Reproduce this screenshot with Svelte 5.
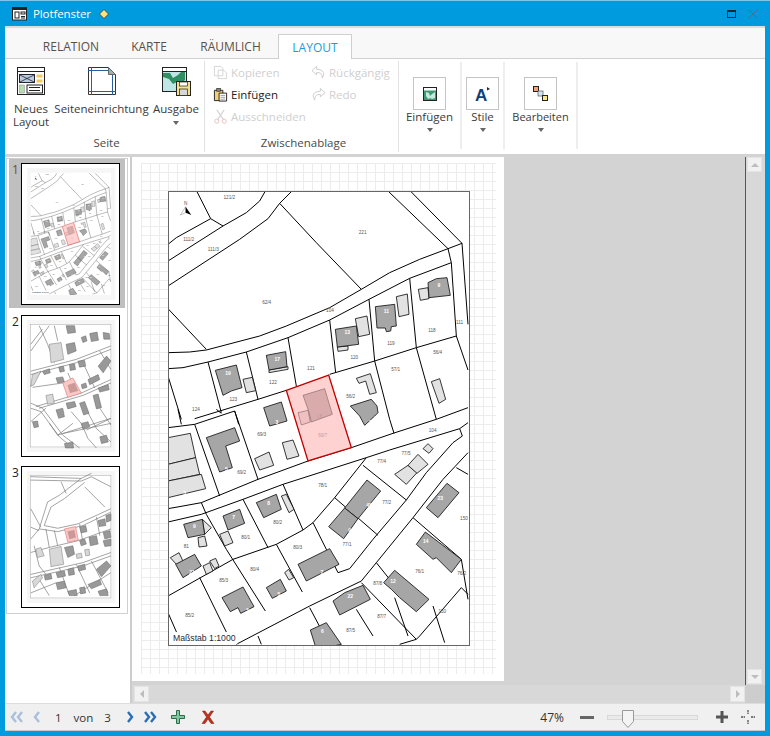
<script>
  const roads = [
    "111,35 153,118 190,140","25,195 50,175 153,118","25,245 190,140 260,100 300,65 317,35",
    "25,320 240,180 325,118 360,72 397,35","360,72 470,190 605,330","25,388 140,510",
    "25,520 90,518 140,512 300,470 380,440 510,385 605,330 690,280 780,240 865,208 907,192",
    "25,568 70,565 145,548 260,518 385,475 510,422 628,360 750,297 875,250",
    "685,35 865,208 875,250 890,470 925,572","752,35 907,192 925,435",
    "145,548 185,700","260,518 295,660","385,475 410,620","510,422 528,580","628,360 645,545 690,720 703,762",
    "750,297 770,505 830,720","105,718 295,660 380,633","510,585 645,545 770,505 890,470","25,590 65,720",
    "225,695 237,735"
  ];
  const roads2 = [
    "25,55 105,45 225,5","445,155 575,115 700,72 830,30 925,-5","25,298 70,290 125,280 295,210 445,155",
    "25,338 125,315 250,270 370,225 620,145 690,122 900,58 925,40",
    "900,58 908,80 880,100 800,190 740,272 640,390 570,478 535,490",
    "925,130 850,210 760,325 650,460 605,515 450,590 230,705",
    "25,560 220,450 350,405 430,362 460,340 525,265 620,145",
    "460,340 500,420 535,490","525,265 655,378","610,168 740,272","370,225 430,362",
    "250,270 325,415","125,280 140,315 200,420 317,605","350,405 428,548","120,505 200,668","25,610 60,690",
    "450,595 495,680","590,600 640,680","605,520 770,690","650,460 690,510","760,325 905,450 925,570",
    "905,535 780,680 770,690 720,705","705,565 745,680","820,590 855,700","295,680 305,705","105,45 180,260",
    "225,5 295,210","890,175 925,195","905,535 925,555","55,0 65,45","170,0 185,12"
  ];
  const dark = [
    "167,573 230,557 247,625 215,635 190,648","320,528 378,517 382,562 328,572","527,450 590,440 597,495 533,503",
    "647,382 705,375 710,440 695,442 693,455 680,457 677,446 652,446","805,310 830,298 862,295 872,348 808,355",
    "572,680 635,660 652,680 655,700 645,710 615,738 600,710","312,685 365,668 382,725 330,740"
  ];
  const light = [
    "250,600 278,594 288,634 260,640","328,572 385,562 385,570 328,580","587,418 622,410 630,465 597,472",
    "533,503 565,500 565,512 535,516","710,352 743,344 748,405 718,412","776,330 805,325 808,358 782,363",
    "590,597 632,583 650,640 630,645 618,605 598,612","815,607 840,598 858,660 838,672"
  ];
  const dark2 = [
    "140,85 225,55 240,95 198,110 218,175 180,188","290,280 350,255 365,300 312,325","190,320 240,300 255,342 205,362",
    "72,345 128,330 135,375 85,385","48,465 105,435 125,470 70,505","622,212 663,245 595,328 555,296",
    "555,296 595,328 552,388 507,352","800,295 862,222 898,250 835,325","415,465 510,418 538,465 440,515",
    "770,405 797,368 905,450 875,490 830,445 820,450","320,535 362,510 380,545 338,567",
    "187,565 250,533 283,592 243,612 235,595 212,607","520,575 555,550 610,528 632,570 540,617",
    "672,520 705,483 808,570 770,607 720,565 695,540","452,662 500,640 545,705 470,720"
  ];
  const light2 = [
    "25,85 92,72 108,145 25,165","25,165 108,145 120,195 25,215","25,215 125,195 138,238 25,265",
    "285,148 328,128 342,168 300,182","368,100 400,92 418,140 382,150","128,330 155,355 135,375",
    "115,385 135,380 142,410 118,413","180,375 205,365 220,400 195,410","365,260 380,255 403,300 388,310",
    "32,445 58,430 72,460 50,465","130,470 150,460 160,485 140,495","150,455 168,447 178,470 165,478",
    "705,195 745,168 772,190 740,225","745,168 775,135 805,165 772,192","790,118 805,103 820,118 808,132",
    "375,490 387,480 402,505 388,512"
  ];
  const labels = [
    ["121/2",209,58],["111/2",87,185],["111/3",161,215],["221",609,163],["62/4",321,373],["104",511,397],["111",900,433],
    ["118",817,457],["119",694,496],["120",584,538],["121",454,571],["122",340,613],["123",221,665],["124",109,695],
    ["56/4",834,523],["57/1",708,574],["56/2",573,655]
  ];
  const labels2 = [
    ["69/3",306,80],["69/2",246,193],["104",819,67],["77/5",739,136],["77/4",666,160],["78/1",489,233],["77/2",681,283],
    ["150",913,332],["80/2",354,344],["80/1",258,388],["81",80,415],["80/3",414,418],["77/1",562,409],["80/4",285,485],
    ["76/1",780,491],["76/2",906,497],["85/3",192,518],["87/8",654,526],["85/2",90,623],["87/7",666,626],["87/5",573,668],["150",848,612]
  ];
  const nums = [["19",205,587],["17",353,545],["13",563,464],["11",680,402],["9",838,323]];
  const nums2 = [
    ["8",327,287],["7",222,330],["9",104,357],["21",97,493],["45",628,292],["9",570,367],["23",842,272],["14",798,401],
    ["12",700,520],["7",487,493],["5",358,560],["5",264,608],["22",572,567],["6",488,672],["5",200,185],["3",75,257],["20",636,45],["3",352,43]
  ];

  const thumb2 = {
    lines: ["95,190 230,155 333,115","95,200 230,165 333,125","100,238 190,225","110,295 245,255 333,215","120,300 250,262 333,225",
      "95,285 130,300 190,380 240,418","95,300 125,310 180,385 220,418","175,380 333,330","190,375 333,345","95,110 130,65","95,130 150,55",
      "120,55 145,110 165,165","165,55 175,100","205,195 225,240","250,165 285,240","300,130 333,185","215,310 245,345 265,390 290,418",
      "255,295 290,360 333,400","300,300 333,350","140,300 95,340","150,345 175,380","95,235 125,190","220,345 175,380","260,365 333,330"],
    dark: ["200,110 225,105 230,130 205,140","245,90 258,85 262,100 250,105","270,78 292,74 296,98 275,102","200,55 225,55 228,75 205,78",
      "310,75 328,78 330,95 312,95","295,175 320,145 333,160 310,195","265,215 295,200 300,215 270,230","245,230 258,225 262,238 248,242",
      "210,170 225,168 228,185 212,188","178,178 192,175 195,190 182,193","235,160 255,158 258,175 240,178","170,305 190,300 195,325 178,330",
      "200,285 225,280 230,295 205,302","240,285 255,280 268,315 252,320","280,262 295,258 305,298 290,302","295,240 325,230 328,245 300,252",
      "245,345 265,340 270,355 250,362","195,405 220,400 222,418 198,418","300,385 320,380 325,400 305,405","100,340 115,338 118,355 105,358",
      "130,190 150,183 153,195 135,200","170,210 190,207 195,222 175,225"],
    light: ["150,110 185,105 193,155 155,165","100,200 125,190 105,230 95,235","140,262 160,258 165,285 145,288"],
    lot: ["190,225 220,210 245,255 205,268","205,232 225,225 235,248 212,254"]
  };
  const thumb3 = {
    lines: ["95,55 245,60 275,45","95,65 245,68 275,55 333,85","245,60 180,110 145,130 120,210 95,240","255,72 195,120 155,145 135,200 175,208 235,195 333,150",
      "120,210 175,218 250,200 333,160","185,70 200,105","255,85 315,145","95,150 125,205","95,205 120,215","95,280 150,265 235,245 333,210",
      "95,345 250,310 333,280","95,355 250,320 333,290","105,260 120,320 140,345","140,210 150,265","165,215 175,260","240,195 250,250","290,175 300,230",
      "180,325 210,408","230,315 270,400","275,305 325,400","333,340 225,408","120,360 150,408","95,400 170,370"],
    dark: ["195,265 220,260 225,285 205,295","240,205 258,200 262,218 245,222","268,235 290,230 295,255 272,260","240,245 255,240 260,255 245,260",
      "295,185 315,180 318,200 298,203","318,170 333,165 333,185 320,190","310,220 330,215 333,235 315,240","310,245 333,240 333,260 315,262",
      "235,320 255,315 258,330 238,335","290,330 320,305 333,320 305,352","265,375 300,360 305,375 275,388","295,395 320,388 325,408 300,408",
      "205,395 230,390 233,408 210,408","170,340 195,335 198,350 175,355","205,330 222,325 225,345 208,348","240,385 255,382 258,400 243,403",
      "135,348 155,343 158,358 138,362","170,370 195,365 200,385 175,390"],
    light: ["150,270 185,262 193,315 155,322","230,285 245,282 248,295 232,298","255,272 268,270 270,288 258,290","100,365 125,345 130,355 105,385","110,270 125,265 135,290 115,295"],
    lot: ["195,210 228,203 236,243 205,250","205,218 224,214 228,235 210,240"]
  };
</script>

{#snippet smallThumb(d)}
  <svg class="thumb-svg" viewBox="69 27 288 414" aria-hidden="true">
    <rect x="69" y="27" width="288" height="414" fill="#fff" />
    <rect x="84" y="38" width="262" height="392" fill="#f6f6f6" />
    <rect x="95" y="52" width="238" height="363" fill="#fff" stroke="#999" stroke-width="1.200" />
    {#each d.lines as p}<polyline points={p} fill="none" stroke="#777" stroke-width="2" />{/each}
    {#each d.light as p}<polygon points={p} fill="#d8d8d8" stroke="#777" stroke-width="1.500" />{/each}
    {#each d.dark as p}<polygon points={p} fill="#999" stroke="#666" stroke-width="1.500" />{/each}
    <polygon points={d.lot[0]} fill="#fbc8c8" stroke="#e08080" stroke-width="2" />
    <polygon points={d.lot[1]} fill="#c99" stroke="#b88" stroke-width="1" />
  </svg>
{/snippet}

<div class="win">
  <header class="title">
    <svg class="ti" viewBox="0 0 16 14" aria-hidden="true">
      <rect x=".5" y=".5" width="14" height="12.500" fill="#fff" stroke="#222" />
      <rect x="1" y="1" width="13" height="2" fill="#222" />
      <rect x="3" y="5" width="4" height="6" fill="none" stroke="#222" />
      <rect x="9" y="5" width="4" height="2" fill="none" stroke="#222" />
      <path d="M9 9.500h4M9 11h4" stroke="#222" />
    </svg>
    <span class="ttext">Plotfenster</span>
    <svg class="dia" viewBox="0 0 10 10" aria-hidden="true"><path d="M5 .5 9.500 5 5 9.500.5 5z" fill="#ffe27a" stroke="#333" stroke-width=".7" /></svg>
    <span class="spacer"></span>
    <svg class="maxi" viewBox="0 0 9 8" aria-hidden="true"><rect x=".5" y=".5" width="8" height="7" fill="none" stroke="#1b2a38" /><rect x="0" y="0" width="9" height="2" fill="#1b2a38" /></svg>
    <svg class="close" viewBox="0 0 10 10" aria-hidden="true"><path d="M.5.500l9 9M9.500.500l-9 9" stroke="#4c6f86" stroke-width="1" /></svg>
  </header>

  <div class="inner">
    <nav class="tabs">
      <span class="tab">RELATION</span>
      <span class="tab">KARTE</span>
      <span class="tab">RÄUMLICH</span>
      <span class="tab active">LAYOUT</span>
    </nav>

    <section class="ribbon">
      <div class="group g1">
        <div class="cols">
          <div class="big c1">
            <svg class="bigicon" viewBox="0 0 28 28" aria-hidden="true">
              <rect x=".5" y=".5" width="27" height="27" fill="#fff" stroke="#222" />
              <path d="M.5 4.500h27" stroke="#222" />
              <rect x="2.500" y="7.500" width="15" height="8" fill="#bcd" stroke="#223" />
              <path d="M3 8l14 7M17 8 3 15" stroke="#223" stroke-width=".8" />
              <rect x="19.500" y="7.500" width="6" height="3" fill="#f4c860" />
              <rect x="19.500" y="12.500" width="6" height="3" fill="#f4c860" />
              <rect x="2.500" y="18" width="5" height="8" fill="#b8dcae" stroke="#889" stroke-width=".5" />
              <rect x="10" y="18" width="15.500" height="8" fill="#fff" stroke="#222" />
              <path d="M12 20.500h11M12 23.500h11" stroke="#222" />
            </svg>
            <span class="lbl">Neues<br />Layout</span>
          </div>
          <div class="big c2">
            <svg class="bigicon" viewBox="0 0 28 28" aria-hidden="true">
              <path d="M.5.500h20l7 7v20H.5z" fill="#fff" stroke="#333" />
              <path d="M20.500.500v7h7z" fill="#aaa" stroke="#666" />
              <path d="M3.500 0v28M24.500 8v20M0 3.500h20M0 24.500h28" stroke="#2b5c9e" stroke-width="1" />
            </svg>
            <span class="lbl">Seiteneinrichtung</span>
          </div>
          <div class="big c3">
            <svg class="bigicon wide" viewBox="0 0 29 29" aria-hidden="true">
              <rect x=".5" y=".5" width="24" height="24" fill="#fff" stroke="#222" />
              <path d="M.5 4.500h24" stroke="#222" />
              <rect x="1" y="5" width="23" height="19" fill="#bfe5e4" />
              <path d="M1 6h7l3 5 5-3 3-3h4v8l-4 4-4-2-4 2-4-5-6-2z" fill="#2f8f63" />
              <rect x="14.500" y="14.500" width="14" height="14" fill="#f7e08a" stroke="#222" />
              <rect x="17.500" y="15" width="8" height="4" fill="#fff" stroke="#222" stroke-width=".7" />
              <rect x="17.500" y="22" width="8" height="6.500" fill="#d8d8d8" stroke="#222" stroke-width=".7" />
            </svg>
            <span class="lbl">Ausgabe</span>
            <i class="caret"></i>
          </div>
        </div>
        <div class="gt">Seite</div>
      </div>

      <div class="group g2">
        <div class="cols2">
          <div class="col">
            <div class="sm off">
              <svg viewBox="0 0 16 16" aria-hidden="true"><path d="M1.500 1.500h7l2 2v8h-9zM5.500 5.500h6l3 3v6h-9z" fill="#fff" stroke="#d4d4d4" /></svg>
              <span>Kopieren</span>
            </div>
            <div class="sm">
              <svg viewBox="0 0 16 16" aria-hidden="true">
                <path d="M1.500 3.500h9v11h-9z" fill="#f4cf73" stroke="#222" />
                <rect x="4" y="1.500" width="4" height="3" fill="#888" stroke="#222" stroke-width=".7" />
                <path d="M6.500 6.500h8v8.500h-8z" fill="#fff" stroke="#222" />
                <path d="M8 9h5M8 11h5M8 13h5" stroke="#777" stroke-width=".7" />
              </svg>
              <span>Einfügen</span>
            </div>
            <div class="sm off">
              <svg viewBox="0 0 16 16" aria-hidden="true"><path d="M4 1l7 10M12 1 5 11" stroke="#d4d4d4" stroke-width="1.300" fill="none" /><circle cx="4" cy="13" r="2.200" fill="#fff" stroke="#e8c0c0" /><circle cx="12" cy="13" r="2.200" fill="#fff" stroke="#e8c0c0" /></svg>
              <span>Ausschneiden</span>
            </div>
          </div>
          <div class="col">
            <div class="sm off">
              <svg viewBox="0 0 16 16" aria-hidden="true"><path d="M6 1.500 1 6l5 4.500V8c4 0 6 1 6 6 3-5 2-9-6-9.500z" fill="#fff" stroke="#ccc" /></svg>
              <span>Rückgängig</span>
            </div>
            <div class="sm off">
              <svg viewBox="0 0 16 16" aria-hidden="true"><path d="M10 1.500 15 6l-5 4.500V8c-4 0-6 1-6 6-3-5-2-9 6-9.500z" fill="#fff" stroke="#ccc" /></svg>
              <span>Redo</span>
            </div>
          </div>
        </div>
        <div class="gt">Zwischenablage</div>
      </div>

      <div class="group g3">
        <div class="boxb">
          <svg viewBox="0 0 14 14" aria-hidden="true"><rect x=".5" y=".5" width="13" height="13" fill="#3d9a72" stroke="#222" /><rect x="1" y="1" width="12" height="2.500" fill="#fff" /><path d="M3 5l3 1 1 3 2-2 3-2v6l-3 1-2-1-2 1-2-3z" fill="#c6e8e0" /></svg>
        </div>
        <span class="lbl">Einfügen</span>
        <i class="caret"></i>
      </div>
      <div class="group g4">
        <div class="boxb">
          <svg viewBox="0 0 16 16" aria-hidden="true"><text class="aglyph" x="0" y="15">A</text><path d="M12 1v3.500l3-1.500z" fill="#223" /></svg>
        </div>
        <span class="lbl">Stile</span>
        <i class="caret"></i>
      </div>
      <div class="group g5">
        <div class="boxb">
          <svg viewBox="0 0 15 15" aria-hidden="true">
            <rect x=".5" y=".5" width="5" height="5" fill="#f4a27c" stroke="#222" />
            <rect x="5" y="5" width="5" height="5" fill="#cfe6f2" stroke="#555" stroke-width=".7" />
            <rect x="9.500" y="9.500" width="5" height="5" fill="#f7e68a" stroke="#222" />
          </svg>
        </div>
        <span class="lbl small">Bearbeiten</span>
        <i class="caret"></i>
      </div>
    </section>

    <div class="body">
      <aside class="left">
        <div class="thumbs">
          <div class="item sel">
            <span class="n">1</span>
            <div class="frame">
              <svg class="thumb-svg" viewBox="69 27 288 414" aria-hidden="true">
                <rect x="69" y="27" width="288" height="414" fill="#fff" />
                <rect x="84" y="38" width="262" height="392" fill="#f6f6f6" />
                <rect x="95" y="52" width="238" height="363" fill="#fff" />
                <use href="#plan" x="95" y="52" width="238" height="363" />
              </svg>
            </div>
          </div>
          <div class="item">
            <span class="n">2</span>
            <div class="frame">{@render smallThumb(thumb2)}</div>
          </div>
          <div class="item">
            <span class="n">3</span>
            <div class="frame">{@render smallThumb(thumb3)}</div>
          </div>
        </div>
      </aside>

      <div class="main">
        <div class="view">
          <div class="page">
            <div class="grid">
              <svg class="plan" width="302" height="455" viewBox="0 0 302 455" role="img" aria-label="Lageplan">
                <symbol id="plan" viewBox="25 35 903 1362">
                  <rect x="25" y="35" width="903" height="1362" fill="#fff" />
                  <g fill="none" stroke="#000" stroke-width="3">
                    {#each roads as p}<polyline points={p} />{/each}
                    <g transform="translate(0 690)">{#each roads2 as p}<polyline points={p} />{/each}</g>
                  </g>
                  <g stroke="#111" stroke-width="2.500">
                    {#each light as p}<polygon points={p} fill="#e2e2e2" />{/each}
                    {#each dark as p}<polygon points={p} fill="#a6a6a6" />{/each}
                    <g transform="translate(0 690)">
                      {#each light2 as p}<polygon points={p} fill="#e2e2e2" />{/each}
                      {#each dark2 as p}<polygon points={p} fill="#a6a6a6" />{/each}
                    </g>
                  </g>
                  <polygon points="380,633 507,587 575,805 445,845" fill="#ffd2d2" stroke="#c00000" stroke-width="4" />
                  <polygon points="430,648 495,628 518,705 455,728 447,695" fill="#d9abab" stroke="#8a6a6a" stroke-width="2" />
                  <polygon points="415,700 445,693 452,728 425,737" fill="#f0c0c0" stroke="#8a6a6a" stroke-width="2" />
                  <g class="lab">
                    {#each labels as l}<text x={l[1]} y={l[2]}>{l[0]}</text>{/each}
                    <g transform="translate(0 690)">{#each labels2 as l}<text x={l[1]} y={l[2]}>{l[0]}</text>{/each}</g>
                  </g>
                  <text class="lab red" x="489" y="772">69/7</text>
                  <text class="lab red" x="480" y="716">18</text>
                  <g class="hn">
                    {#each nums as l}<text x={l[1]} y={l[2]}>{l[0]}</text>{/each}
                    <g transform="translate(0 690)">{#each nums2 as l}<text x={l[1]} y={l[2]}>{l[0]}</text>{/each}</g>
                  </g>
                  <path d="M78 82 62 107l16-7z" fill="#fff" stroke="#888" stroke-width="1.500" />
                  <path d="M78 82l17 25-17-7z" fill="#000" />
                  <text class="lab" x="78" y="78">N</text>
                  <rect x="33" y="1358" width="200" height="36" fill="#fff" />
                  <text class="scale" x="40" y="1384">Maßstab 1:1000</text>
                </symbol>
                <rect x=".5" y=".5" width="301" height="454" fill="#fff" />
                <use href="#plan" x="0" y="0" width="301" height="454" />
                <rect x=".5" y=".5" width="301" height="454" fill="none" stroke="#666" />
              </svg>
            </div>
          </div>
        </div>
        <div class="vbar">
          <span class="sb"><i class="tri up"></i></span>
          <span class="sb"><i class="tri down"></i></span>
        </div>
        <div class="hbar">
          <span class="sb h"><i class="tri left-t"></i></span>
          <span class="sb h"><i class="tri right-t"></i></span>
        </div>
        <div class="corner"></div>
      </div>
    </div>

    <footer class="status">
      <svg class="nav dbl" viewBox="0 0 14 12" aria-hidden="true"><path d="M6 1 2 6l4 5M12 1 8 6l4 5" fill="none" stroke="#a9bfdc" stroke-width="2.400" /></svg>
      <svg class="nav sgl" viewBox="0 0 8 12" aria-hidden="true"><path d="M6 1 2 6l4 5" fill="none" stroke="#a9bfdc" stroke-width="2.400" /></svg>
      <span class="pg a">1</span>
      <span class="pg b">von</span>
      <span class="pg c">3</span>
      <svg class="nav sgl2" viewBox="0 0 8 12" aria-hidden="true"><path d="M2 1l4 5-4 5" fill="none" stroke="#2a6db5" stroke-width="2.400" /></svg>
      <svg class="nav dbl2" viewBox="0 0 14 12" aria-hidden="true"><path d="M2 1l4 5-4 5M8 1l4 5-4 5" fill="none" stroke="#2a6db5" stroke-width="2.400" /></svg>
      <svg class="plus" viewBox="0 0 14 14" aria-hidden="true"><path d="M5.500.500h3v5h5v3h-5v5h-3v-5h-5v-3h5z" fill="#7fc8a0" stroke="#2e6b4c" /></svg>
      <svg class="xx" viewBox="0 0 14 14" aria-hidden="true"><path d="M1.500 1h2.500L7 5l3-4h2.500L8.500 7l4.500 6.500h-3L7 9l-3 4.500H1L5.500 7z" fill="#c0301c" stroke="#7a1a10" stroke-width=".5" /></svg>
      <span class="spacer"></span>
      <span class="pct">47%</span>
      <span class="minus"></span>
      <div class="slider"><svg class="knob" viewBox="0 0 12 18" aria-hidden="true"><path d="M.5.500h11v11L6 17.500.5 11.500z" fill="#f4f4f4" stroke="#999" /></svg></div>
      <svg class="zplus" viewBox="0 0 12 12" aria-hidden="true"><path d="M6 0v12M0 6h12" stroke="#555" stroke-width="3" /></svg>
      <svg class="pan" viewBox="0 0 14 14" aria-hidden="true"><path d="M7 0v4M7 10v4M0 7h4M10 7h4" stroke="#555" stroke-width="1.300" stroke-dasharray="2 .6" /></svg>
    </footer>
  </div>
</div>

<style>
  :global(body) { margin: 0; background: #009ade; }
  .win {
    width: 770px; height: 736px; box-sizing: border-box;
    background: #009ade; border-top: 1px solid #7cc6ee;
    display: flex; flex-direction: column;
    font-family: "Open Sans", "Noto Sans", sans-serif; font-size: 12px; color: #333;
  }
  .title { height: 25px; display: flex; align-items: center; padding: 0 8px 0 12px; flex: none; }
  .ti { width: 16px; height: 14px; }
  .ttext { color: #fff; margin-left: 5px; font-size: 11.5px; letter-spacing: -.1px; }
  .dia { width: 10px; height: 10px; margin-left: 8px; }
  .spacer { flex: 1; }
  .maxi { width: 9px; height: 8px; }
  .close { width: 10px; height: 10px; margin-left: 12px; margin-right: 4px; }

  .inner { flex: 1; margin: 0 5px 5px 5px; background: #fff; border-top: 2px solid #dcdcdc; display: flex; flex-direction: column; min-height: 0; }
  .tabs { height: 31px; box-sizing: border-box; background: #f8f8f8; border-bottom: 1px solid #d0d0d0; display: flex; align-items: flex-end; padding-left: 30px; flex: none; }
  .tab { width: 72px; text-align: center; height: 24px; line-height: 25px; color: #5c5046; font-size: 12px; margin-right: 16px; }
  .tab:nth-child(2) { width: 52px; margin-right: 16px; }
  .tab:nth-child(3) { width: 79px; margin-right: 8px; }
  .tab.active { width: 74px; height: 25px; margin-bottom: -1px; margin-right: 0; background: #fff; border: 1px solid #cfcfcf; border-bottom: 0; box-sizing: border-box; color: #1a9be0; }

  .ribbon { flex: none; display: flex; align-items: flex-start; padding-top: 2px; box-sizing: border-box; border-bottom: 3px solid #d3d3d3; height: 98px; }
  .group { display: flex; flex-direction: column; box-sizing: border-box; }
  .g1, .g2 { height: 91px; justify-content: space-between; border-right: 1px solid #e2e2e2; }
  .g1 { width: 200px; }
  .g2 { width: 194px; }
  .gt { text-align: center; line-height: 16px; margin-bottom: 1px; padding-left: 4px; color: #4a4a4a; font-size: 11.5px; }
  .cols { display: flex; padding-top: 6px; }
  .big { display: flex; flex-direction: column; align-items: center; }
  .c1 { width: 52px; }
  .c2 { width: 93px; margin-left: -2px; }
  .c3 { width: 52px; margin-left: 2px; }
  .bigicon { width: 28px; height: 28px; display: block; margin-bottom: 7px; }
  .bigicon.wide { width: 29px; height: 29px; margin-bottom: 6px; }
  .lbl { line-height: 13px; text-align: center; white-space: nowrap; font-size: 11.5px; color: #3a3a3a; }
  .lbl.small { font-size: 11px; }
  .caret { display: block; width: 0; height: 0; border: 3px solid transparent; border-top: 4px solid #666; border-bottom: 0; margin-top: 6px; }
  .cols2 { display: flex; padding: 0 0 0 8px; }
  .col { display: flex; flex-direction: column; }
  .col:first-child { width: 98px; }
  .sm { height: 22px; display: flex; align-items: center; gap: 3px; white-space: nowrap; font-size: 11.5px; color: #222; }
  .sm svg { width: 15px; height: 15px; flex: none; }
  .sm.off { color: #cfcfcf; }
  .g3, .g4, .g5 { height: 87px; margin-top: 1px; align-items: center; padding-top: 15px; border-right: 2px solid #eee; }
  .g3 { width: 63px; }
  .g4 { width: 43px; }
  .g5 { width: 73px; }
  .boxb { width: 33px; height: 33px; box-sizing: border-box; border: 1px solid #c4c4c4; display: flex; align-items: center; justify-content: center; }
  .g3 .boxb svg { width: 14px; height: 14px; }
  .g4 .boxb svg { width: 16px; height: 16px; }
  .g5 .boxb svg { width: 15px; height: 15px; }
  .aglyph { font: 700 17px "Liberation Sans", sans-serif; fill: #0f3f78; }
  .g3 .caret, .g4 .caret, .g5 .caret { margin-top: 5px; }

  .body { flex: 1; min-height: 0; display: flex; }
  .left { width: 123px; flex: none; box-sizing: border-box; padding: 1px 0 0 1px; background: #fff; }
  .thumbs { width: 122px; box-sizing: border-box; border: 1px solid #cfcfcf; padding: 0 2px; height: 456px; overflow: hidden; }
  .item { height: 151px; display: flex; padding: 4px 0 0 3px; box-sizing: border-box; }
  .item.sel { background: #bfbfbf; height: 149px; margin-bottom: 3px; }
  .n { width: 9px; font-size: 12px; line-height: 14px; color: #222; }
  .sel .n { color: #7a4f10; }
  .frame { width: 99px; height: 142px; box-sizing: border-box; border: 1px solid #000; background: #fff; flex: none; }
  .thumb-svg { display: block; width: 97px; height: 140px; }

  .main { flex: 1; min-width: 0; display: grid; grid-template-columns: 1fr 20px; grid-template-rows: 1fr 18px; border-left: 2px solid #ccc; margin-left: 2px; }
  .view { background: #d3d3d3; overflow: hidden; }
  .page { width: 372px; height: 524px; background: #fff; box-sizing: border-box; padding: 6px 8px 7px 9px; }
  .grid {
    width: 355px; height: 511px; box-sizing: border-box; padding: 28px 0 0 27px;
    background-image: linear-gradient(#ececec 1px, transparent 1px), linear-gradient(90deg, #ececec 1px, transparent 1px);
    background-size: 9px 9px;
  }
  .plan { display: block; }
  .lab text, text.lab { font: 14px "Liberation Sans", sans-serif; fill: #555; text-anchor: middle; }
  text.lab.red { fill: #c79a9a; }
  .hn text { font: 700 15px "Liberation Sans", sans-serif; fill: #fff; text-anchor: middle; }
  .scale { font: 26px "Liberation Sans", sans-serif; fill: #1d2a3a; }

  .vbar { background: #d8d8d8; display: flex; flex-direction: column; justify-content: space-between; align-items: flex-start; padding: 0 0 1px 1px; border-left: 1px solid #555; box-sizing: border-box; }
  .hbar { background: #d8d8d8; display: flex; justify-content: space-between; padding: 0 0 1px 2px; align-items: center; border-top: 1px solid #d8d8d8; }
  .corner { background: #cdcdcd; }
  .sb { width: 15px; height: 15px; background: #f1f1f1; border: 1px solid #e4e4e4; box-sizing: border-box; display: flex; align-items: center; justify-content: center; }
  .sb.h { height: 16px; }
  .tri { display: block; width: 0; height: 0; border: 4px solid transparent; }
  .up { border-bottom-color: #bdbdbd; border-top: 0; }
  .down { border-top-color: #bdbdbd; border-bottom: 0; }
  .left-t { border-right-color: #bdbdbd; border-left: 0; }
  .right-t { border-left-color: #bdbdbd; border-right: 0; }

  .status { flex: none; background: #f0f0f0; border-top: 1px solid #ddd; border-bottom: 1px solid #c8c8c8; box-sizing: border-box; display: flex; align-items: center; padding: 0 10px 0 5px; height: 28px; }
  .nav { height: 12px; }
  .dbl, .dbl2 { width: 14px; }
  .sgl, .sgl2 { width: 8px; }
  .sgl { margin-left: 9px; }
  .pg { font-size: 11.5px; color: #333; }
  .a { margin-left: 14px; }
  .b { margin-left: 12px; }
  .c { margin-left: 11px; }
  .sgl2 { margin-left: 15px; }
  .dbl2 { margin-left: 9px; }
  .plus { width: 14px; height: 14px; margin-left: 14px; }
  .xx { width: 14px; height: 14px; margin-left: 16px; }
  .pct { font-size: 12px; }
  .minus { width: 14px; height: 3px; background: #666; margin-left: 16px; }
  .slider { width: 91px; height: 5px; background: #eaeaea; border: 1px solid #d8d8d8; box-sizing: border-box; margin-left: 13px; position: relative; }
  .knob { position: absolute; left: 14px; top: -6px; width: 12px; height: 18px; }
  .zplus { width: 12px; height: 12px; margin-left: 18px; }
  .pan { width: 14px; height: 14px; margin-left: 13px; }
</style>
